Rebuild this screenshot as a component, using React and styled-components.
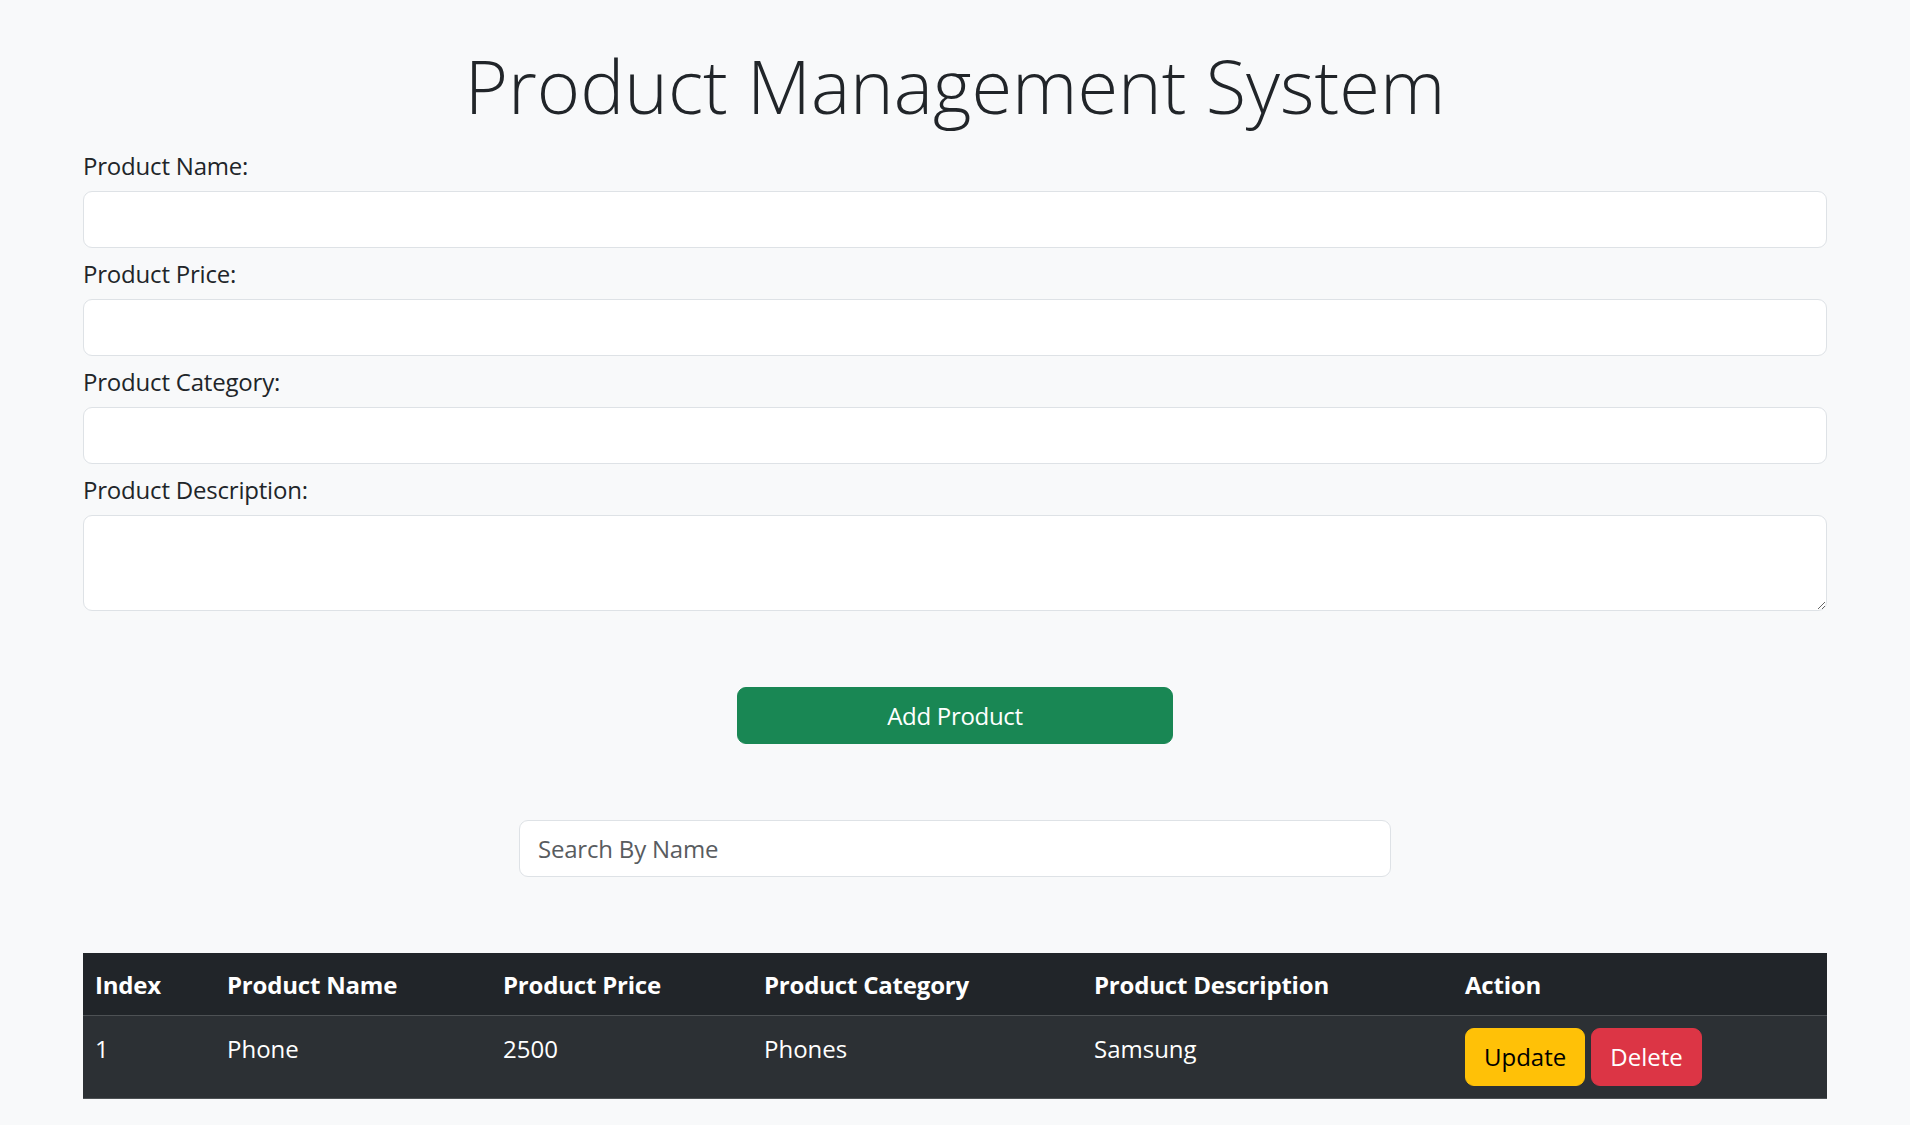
import { useState } from 'react';
import styled, { createGlobalStyle } from 'styled-components';

const GlobalStyle = createGlobalStyle`
    html, body {
        margin: 0;
        padding: 0;
        background: #f8f9fa;
    }

    body {
        font-family: 'Open Sans', 'Noto Sans', sans-serif;
        color: #212529;
    }

    * {
        box-sizing: border-box;
    }
`;

const products = [
    { name: 'Phone', price: '2500', category: 'Phones', description: 'Samsung' }
];

const columns = [
    { label: 'Index', width: 132 },
    { label: 'Product Name', width: 276 },
    { label: 'Product Price', width: 261 },
    { label: 'Product Category', width: 330 },
    { label: 'Product Description', width: 371 },
    { label: 'Action', width: 374 }
];

const fields = [
    { id: 'name', label: 'Product Name:' },
    { id: 'price', label: 'Product Price:' },
    { id: 'category', label: 'Product Category:' }
];

export default function App () {

    const [form, setForm] = useState({ name: '', price: '', category: '', description: '' });
    const [search, setSearch] = useState('');

    function handleChange (e) {
        setForm({ ...form, [e.target.id]: e.target.value });
    }

    const visible = products.filter((p) => p.name.toLowerCase().includes(search.toLowerCase()));

    return (
        <>
            <GlobalStyle />
            <Page>
                <Title>Product Management System</Title>

                <Form onSubmit={(e) => e.preventDefault()}>
                    {fields.map((field) => (
                        <FormGroup key={field.id}>
                            <Label htmlFor={field.id}>{field.label}</Label>
                            <Input id={field.id} type='text' value={form[field.id]} onChange={handleChange} />
                        </FormGroup>
                    ))}
                    <FormGroup>
                        <Label htmlFor='description'>Product Description:</Label>
                        <TextArea id='description' rows={2} value={form.description} onChange={handleChange} />
                    </FormGroup>

                    <ButtonRow>
                        <AddButton type='submit'>Add Product</AddButton>
                    </ButtonRow>
                </Form>

                <SearchRow>
                    <SearchInput
                        type='text'
                        placeholder='Search By Name'
                        value={search}
                        onChange={(e) => setSearch(e.target.value)}
                    />
                </SearchRow>

                <Table>
                    <thead>
                        <tr>
                            {columns.map((col) => (
                                <Th key={col.label} $width={col.width}>{col.label}</Th>
                            ))}
                        </tr>
                    </thead>
                    <tbody>
                        {visible.map((p, i) => (
                            <Row key={p.name}>
                                <Td>{i + 1}</Td>
                                <Td>{p.name}</Td>
                                <Td>{p.price}</Td>
                                <Td>{p.category}</Td>
                                <Td>{p.description}</Td>
                                <Td $action>
                                    <ActionButton $variant='warning'>Update</ActionButton>
                                    <ActionButton $variant='danger'>Delete</ActionButton>
                                </Td>
                            </Row>
                        ))}
                    </tbody>
                </Table>
            </Page>
        </>
    );

}

const Page = styled.div`
    width: 1744px;
    margin: 0 auto;
    padding-top: 41px;
`;

const Title = styled.h1`
    margin: 0 0 17px;
    text-align: center;
    font-size: 74px;
    line-height: 90px;
    font-weight: 350;
    color: #212529;
`;

const Form = styled.form`
    display: flex;
    flex-direction: column;
`;

const FormGroup = styled.div`
    display: flex;
    flex-direction: column;
    margin-bottom: 8px;
`;

const Label = styled.label`
    font-size: 24px;
    line-height: 36px;
    margin-bottom: 7px;
    letter-spacing: -0.2px;
`;

const fieldBase = `
    width: 100%;
    padding: 9px 18px;
    font-family: 'Open Sans', 'Noto Sans', sans-serif;
    font-size: 24px;
    line-height: 36px;
    color: #212529;
    background: #ffffff;
    border: 1.5px solid #dee2e6;
    border-radius: 9px;
    outline: none;
`;

const Input = styled.input`
    ${fieldBase}
    height: 57px;
`;

const TextArea = styled.textarea`
    ${fieldBase}
    height: 96px;
    resize: vertical;
`;

const ButtonRow = styled.div`
    display: flex;
    justify-content: center;
    margin-top: 68px;
`;

const AddButton = styled.button`
    width: 436px;
    height: 57px;
    font-family: 'Open Sans', 'Noto Sans', sans-serif;
    font-size: 24px;
    color: #ffffff;
    background: #198754;
    border: 1.5px solid #198754;
    border-radius: 9px;
    cursor: pointer;
    letter-spacing: -0.3px;
`;

const SearchRow = styled.div`
    display: flex;
    justify-content: center;
    margin-top: 76px;
`;

const SearchInput = styled.input`
    ${fieldBase}
    width: 872px;
    height: 57px;
    letter-spacing: -0.2px;

    &::placeholder {
        color: #595c5f;
    }
`;

const Table = styled.table`
    width: 100%;
    margin-top: 76px;
    border-collapse: collapse;
    table-layout: fixed;
    color: #ffffff;
    font-size: 24px;
    line-height: 36px;
`;

const Th = styled.th`
    width: ${(props) => props.$width}px;
    padding: 14px 12px 12px;
    text-align: left;
    font-weight: 700;
    letter-spacing: -0.2px;
    background: #212529;
    border-bottom: 1.5px solid #4d5154;
`;

const Row = styled.tr`
    background: #2c3034;
    border-bottom: 1.5px solid #4d5154;
`;

const Td = styled.td`
    padding: ${(props) => (props.$action ? '12px' : '15px 12px 12px')};
    vertical-align: top;
`;

const ActionButton = styled.button`
    height: 58px;
    padding: 9px 18px;
    margin-right: 6px;
    font-family: 'Open Sans', 'Noto Sans', sans-serif;
    font-size: 24px;
    line-height: 36px;
    border: 1.5px solid ${(props) => (props.$variant === 'danger' ? '#dc3545' : '#ffc107')};
    border-radius: 9px;
    cursor: pointer;
    color: ${(props) => (props.$variant === 'danger' ? '#ffffff' : '#000000')};
    background: ${(props) => (props.$variant === 'danger' ? '#dc3545' : '#ffc107')};
`;
